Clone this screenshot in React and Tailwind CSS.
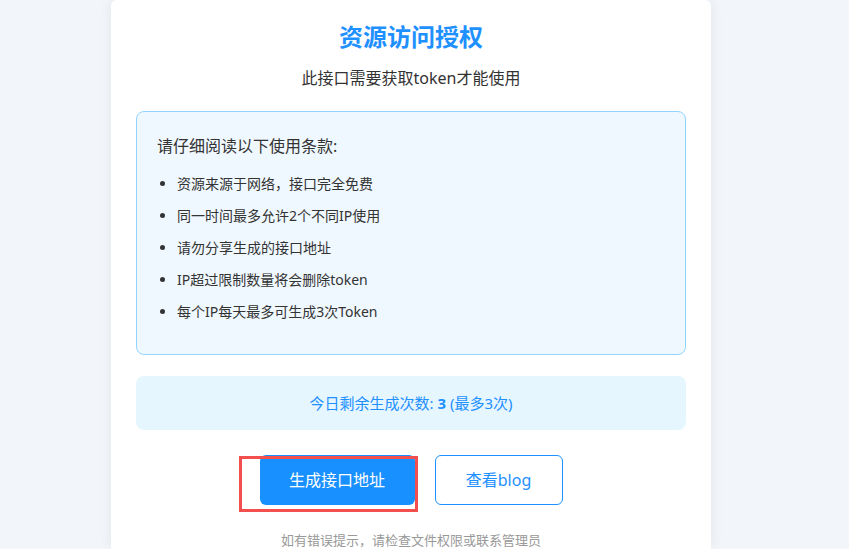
import React from "react";

const terms = [
    "资源来源于网络，接口完全免费",
    "同一时间最多允许2个不同IP使用",
    "请勿分享生成的接口地址",
    "IP超过限制数量将会删除token",
    "每个IP每天最多可生成3次Token",
];

export default function App() {
    return (
        <div
            className="min-h-[549px] w-full bg-[#f2f6fa] overflow-hidden"
            style={{ fontFamily: '"Noto Sans", "Noto Sans CJK SC", sans-serif' }}
        >
            <div className="ml-[111px] w-[600px] h-[549px] bg-white rounded-t-md shadow-[0_0_14px_rgba(0,0,0,0.07)] px-[25px] pt-[20px]">
                <h1 className="text-center text-[24px] leading-[34px] font-bold text-[#1e90ff]">资源访问授权</h1>
                <p className="mt-[12px] text-center text-[16px] leading-[24px] text-[#333]">此接口需要获取token才能使用</p>

                <div className="mt-[21px] h-[244px] rounded-lg border border-[#91d5ff] bg-[#f0f8ff] px-[20px] pt-[23px]">
                    <div className="text-[16px] leading-[22px] text-[#333]">请仔细阅读以下使用条款:</div>
                    <ul className="mt-[11px] list-disc pl-[20px] text-[14px] leading-[32px] text-[#333]">
                        {terms.map((t) => (
                            <li key={t}>{t}</li>
                        ))}
                    </ul>
                </div>

                <div className="mt-[21px] h-[54px] rounded-lg bg-[#e6f6ff] flex items-center justify-center text-[15px] text-[#1e90ff]">
                    今日剩余生成次数:&nbsp;<span className="font-bold">3</span>&nbsp;(最多3次)
                </div>

                <div className="mt-[25px] flex justify-center gap-[20px]">
                    <div className="relative">
                        <button className="w-[155px] h-[50px] rounded-md bg-[#1890ff] text-white text-[16px]">生成接口地址</button>
                        <div className="absolute left-[-21px] top-[1px] w-[179px] h-[56px] border-[3px] border-[#f44f4f]" />
                    </div>
                    <button className="w-[128px] h-[50px] rounded-md border border-[#1e90ff] bg-white text-[#1e90ff] text-[16px]">查看blog</button>
                </div>

                <p className="mt-[26px] text-center text-[13px] leading-[18px] text-[#999]">如有错误提示，请检查文件权限或联系管理员</p>
            </div>
        </div>
    );
}
